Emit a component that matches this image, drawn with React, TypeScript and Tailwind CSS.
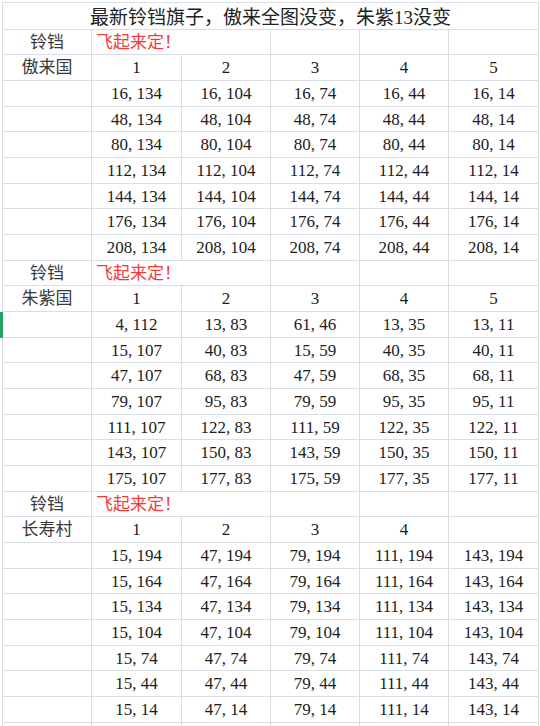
import React from 'react';

const widths = ['w-[89px]', 'w-[90px]', 'w-[89px]', 'w-[89px]', 'w-[89px]', 'w-[90px]'];

type Row =
  | { kind: 'label' }
  | { kind: 'head'; name: string; cols: string[] }
  | { kind: 'data'; cols: string[] };

const aolai = [16, 48, 80, 112, 144, 176, 208].map((x) => ({
  kind: 'data' as const,
  cols: [134, 104, 74, 44, 14].map((y) => `${x}, ${y}`),
}));

const zhuzi = [
  ['4, 112', '13, 83', '61, 46', '13, 35', '13, 11'],
  ['15, 107', '40, 83', '15, 59', '40, 35', '40, 11'],
  ['47, 107', '68, 83', '47, 59', '68, 35', '68, 11'],
  ['79, 107', '95, 83', '79, 59', '95, 35', '95, 11'],
  ['111, 107', '122, 83', '111, 59', '122, 35', '122, 11'],
  ['143, 107', '150, 83', '143, 59', '150, 35', '150, 11'],
  ['175, 107', '177, 83', '175, 59', '177, 35', '177, 11'],
].map((cols) => ({ kind: 'data' as const, cols }));

const changshou = [194, 164, 134, 104, 74, 44, 14].map((y) => ({
  kind: 'data' as const,
  cols: [15, 47, 79, 111, 143].map((x) => `${x}, ${y}`),
}));

const rows: Row[] = [
  { kind: 'label' },
  { kind: 'head', name: '傲来国', cols: ['1', '2', '3', '4', '5'] },
  ...aolai,
  { kind: 'label' },
  { kind: 'head', name: '朱紫国', cols: ['1', '2', '3', '4', '5'] },
  ...zhuzi,
  { kind: 'label' },
  { kind: 'head', name: '长寿村', cols: ['1', '2', '3', '4', ''] },
  ...changshou,
];

// row with the selected row header (green mark on the left)
const SELECTED = 11;

function Cell({ w, h, children }: { w: string; h: string; children?: React.ReactNode }) {
  return (
    <div className={`${w} ${h} shrink-0 border-r border-b border-[#d9dde5] flex items-center justify-center`}>
      {children}
    </div>
  );
}

export default function App() {
  return (
    <div className="w-[540px] h-[726px] overflow-hidden bg-white pt-[2px] font-['Liberation_Serif','Noto_Sans_CJK_SC',serif] text-[17px] leading-none text-[#1c1c1c]">
      {/* title row */}
      <div className="flex">
        <div className="w-[2px] shrink-0" />
        <div className="flex border-l border-t border-[#d9dde5]">
          <div className="w-[536px] h-[27px] border-r border-b border-[#d9dde5] flex items-center justify-center pt-[3px] text-[19px] text-[#222]">
            最新铃铛旗子，傲来全图没变，朱紫13没变
          </div>
        </div>
      </div>

      {rows.map((row, i) => {
        const h = i % 3 === 0 ? 'h-[25px]' : 'h-[26px]';
        const sel = i === SELECTED;
        return (
          <div key={i} className="flex">
            <div className={`w-[2px] shrink-0 ${sel ? 'bg-[#1fa463]' : ''}`} />
            <div className={`flex border-l ${sel ? 'border-[#1fa463]' : 'border-[#d9dde5]'}`}>
              {row.kind === 'label' && (
                <>
                  <Cell w={widths[0]} h={h}>
                    <span className="text-[#3a3a3a]">铃铛</span>
                  </Cell>
                  <div className={`w-[179px] ${h} shrink-0 border-r border-b border-[#d9dde5] flex items-center pl-[4px] text-[#f23b3b]`}>
                    飞起来定！
                  </div>
                  <Cell w={widths[3]} h={h} />
                  <Cell w={widths[4]} h={h} />
                  <Cell w={widths[5]} h={h} />
                </>
              )}
              {row.kind === 'head' && (
                <>
                  <Cell w={widths[0]} h={h}>
                    <span className="text-[#3a3a3a]">{row.name}</span>
                  </Cell>
                  {row.cols.map((c, j) => (
                    <Cell key={j} w={widths[j + 1]} h={h}>
                      {c}
                    </Cell>
                  ))}
                </>
              )}
              {row.kind === 'data' && (
                <>
                  <Cell w={widths[0]} h={h} />
                  {row.cols.map((c, j) => (
                    <Cell key={j} w={widths[j + 1]} h={h}>
                      {c}
                    </Cell>
                  ))}
                </>
              )}
            </div>
          </div>
        );
      })}

      {/* partially visible next row */}
      <div className="flex">
        <div className="w-[2px] shrink-0" />
        <div className="flex border-l border-[#d9dde5]">
          {widths.map((w, j) => (
            <Cell key={j} w={w} h="h-[26px]" />
          ))}
        </div>
      </div>
    </div>
  );
}
